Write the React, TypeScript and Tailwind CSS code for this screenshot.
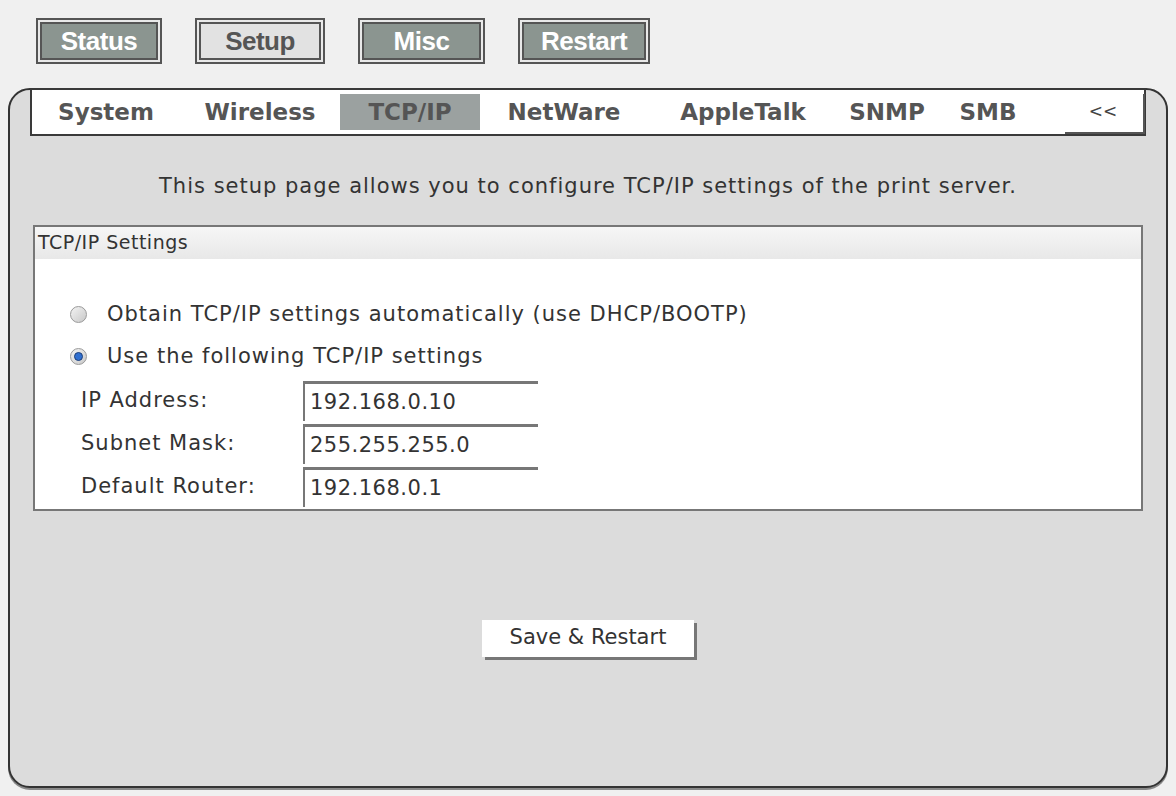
import React from "react";

// top nav buttons
const navButtons = [
  { label: "Status", active: false, w: "w-[126px]" },
  { label: "Setup", active: true, w: "w-[130px]" },
  { label: "Misc", active: false, w: "w-[127px]" },
  { label: "Restart", active: false, w: "w-[132px]" },
];

const tabs = [
  { label: "System", w: "w-[148px]" },
  { label: "Wireless", w: "w-[160px]" },
  { label: "TCP/IP", w: "w-[140px]", active: true },
  { label: "NetWare", w: "w-[168px]" },
  { label: "AppleTalk", w: "w-[190px]" },
  { label: "SNMP", w: "w-[98px]" },
  { label: "SMB", w: "w-[104px]" },
];

const fields = [
  { label: "IP Address:", value: "192.168.0.10" },
  { label: "Subnet Mask:", value: "255.255.255.0" },
  { label: "Default Router:", value: "192.168.0.1" },
];

const Radio = ({ checked }: { checked?: boolean }) => (
  <span className="flex h-[17px] w-[17px] shrink-0 items-center justify-center rounded-full border border-[#9a9a9a] bg-gradient-to-br from-[#f4f4f4] to-[#c8c8c8]">
    {checked && <span className="h-[9px] w-[9px] rounded-full border border-[#1d3f7a] bg-[#2f6fd0]" />}
  </span>
);

export default function App() {
  return (
    <div className="min-h-screen bg-[#f0f0f0] pt-[18px] font-['DejaVu_Sans',Verdana,sans-serif] text-[#333]">
      {/* Top buttons */}
      <div className="ml-[36px] flex h-[46px] gap-[33px]">
        {navButtons.map((b) => (
          <div key={b.label} className={`${b.w} h-full border-2 border-[#555] bg-[#e9e9e9] p-[2px]`}>
            <div
              className={`flex h-full items-center justify-center border-2 border-[#555] font-['Liberation_Sans',Arial,sans-serif] text-[26px] font-bold tracking-[-0.5px] ${
                b.active ? "bg-[#e2e2e2] text-[#555]" : "bg-[#8b9590] text-white"
              }`}
            >
              {b.label}
            </div>
          </div>
        ))}
      </div>

      {/* Main panel */}
      <div className="mx-[8px] mt-[24px] flex h-[700px] flex-col rounded-[22px] border-2 border-[#333] bg-[#dcdcdc] shadow-[0_2px_0_#888]">
        {/* Tab strip */}
        <div className="mx-[20px] mt-[-2px] flex h-[48px] items-stretch border-2 border-[#3a3a3a] bg-white">
          {tabs.map((t) => (
            <div
              key={t.label}
              className={`${t.w} my-[4px] flex items-center justify-center text-[23px] font-bold ${
                t.active ? "bg-[#9ba1a0] text-[#555]" : "text-[#555]"
              }`}
            >
              {t.label}
            </div>
          ))}
          <div className="flex-1" />
          <div className="my-[2px] mr-[1px] flex w-[80px] items-center justify-center bg-white text-[17px] text-[#444] shadow-[2px_2px_0_#555]">
            &lt;&lt;
          </div>
        </div>

        <p className="mt-[35px] text-center text-[21px] tracking-[1px]">
          This setup page allows you to configure TCP/IP settings of the print server.
        </p>

        {/* Settings box */}
        <div className="mx-[23px] mt-[22px] border-2 border-[#777] bg-white">
          <div className="flex h-[32px] items-center bg-gradient-to-b from-[#f6f6f6] to-[#e8e8e8] px-[3px] text-[19px] tracking-[0.5px]">
            TCP/IP Settings
          </div>
          <div className="pl-[35px] pt-[35px] text-[21px] tracking-[1px]">
            <div className="flex h-[42px] items-center gap-[20px]">
              <Radio />
              <span>Obtain TCP/IP settings automatically (use DHCP/BOOTP)</span>
            </div>
            <div className="flex h-[42px] items-center gap-[20px]">
              <Radio checked />
              <span>Use the following TCP/IP settings</span>
            </div>
            <div className="pl-[11px] pt-[2px]">
              {fields.map((f) => (
                <div key={f.label} className="flex h-[43px] items-center">
                  <span className="w-[222px]">{f.label}</span>
                  <div className="flex h-[40px] w-[235px] items-center border-l-2 border-t-[3px] border-[#777] bg-white pl-[5px] tracking-[0.5px]">
                    {f.value}
                  </div>
                </div>
              ))}
            </div>
          </div>
        </div>

        <div className="mt-[109px] flex justify-center">
          <button className="h-[37px] w-[212px] bg-white text-[21px] text-[#333] shadow-[3px_3px_0_#777]">
            Save &amp; Restart
          </button>
        </div>
      </div>
    </div>
  );
}
